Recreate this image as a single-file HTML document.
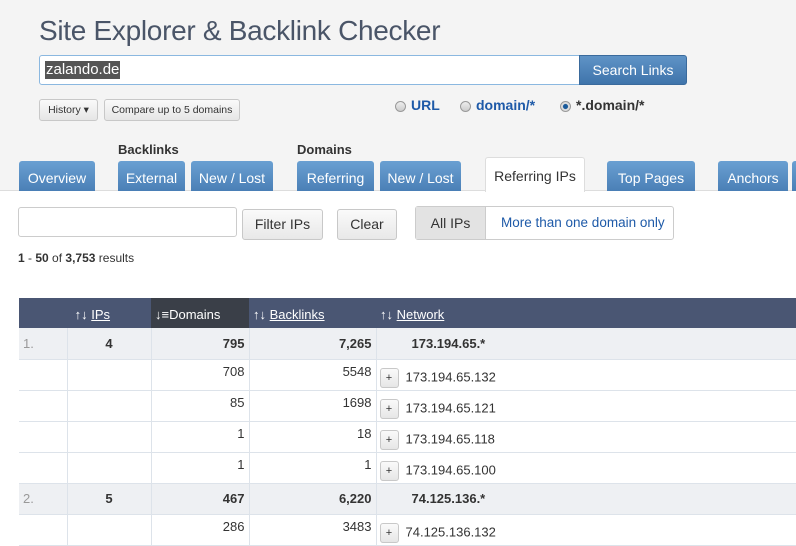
<!DOCTYPE html>
<html><head><style>
*{margin:0;padding:0;box-sizing:border-box}
body{width:796px;height:542px;overflow:hidden;background:#fff;font-family:"Liberation Sans",sans-serif;position:relative;color:#333}
.top{position:absolute;left:0;top:0;width:796px;height:191px;background:#f4f4f4;border-bottom:1px solid #ddd}
.a{position:absolute}
h1{position:absolute;left:39px;top:15px;font-size:28px;font-weight:normal;color:#4a5568;letter-spacing:-0.3px}
.inp{left:39px;top:55px;width:541px;height:30px;background:#fff;border:1px solid #8bb8e0;border-radius:3px 0 0 3px}
.sel{left:45px;top:61px;background:#555;color:#fff;font-size:15px;line-height:18px;padding:0 1px}
.sb{left:579px;top:55px;width:108px;height:30px;background:linear-gradient(#5f93c6,#3f74ab);border:1px solid #3a6a9c;border-radius:0 3px 3px 0;color:#fff;font-size:14px;text-align:center;line-height:28px}
.btn{height:22px;border:1px solid #c8c8c8;border-radius:3px;background:linear-gradient(#fafafa,#e6e6e6);font-size:10.5px;line-height:20px;text-align:center;color:#333}
.rad{width:11px;height:11px;border:1px solid #999;border-radius:50%;background:linear-gradient(#eee,#ccc)}
.rl{font-size:14px;font-weight:bold;color:#1e5aa8}
.tab{top:161px;height:30px;background:linear-gradient(#6aa0d2,#4a7fb6);color:#fff;font-size:14px;text-align:center;line-height:34px;border-radius:3px 3px 0 0}
.lbl{font-size:13px;font-weight:bold;top:142px;color:#333}
.fb{height:31px;border:1px solid #c8c8c8;border-radius:3px;background:linear-gradient(#fafafa,#e8e8e8);font-size:14px;line-height:29px;text-align:center;color:#333}
table{position:absolute;left:19px;top:298px;border-collapse:collapse;font-size:13px;width:790px}
th{background:#4a5673;color:#fff;font-weight:normal;height:30px;text-align:left;font-size:13px;padding-top:3px}
th u{text-decoration:underline}
td{height:31px;border:1px solid #dde3ea;border-top:0;border-left:0}
tr.g td{background:#eef0f3;font-weight:bold}
.r{text-align:right;padding-right:4px}
.pl{display:inline-block;width:19px;height:20px;border:1px solid #c8c8c8;border-radius:3px;background:linear-gradient(#fafafa,#e6e6e6);font-size:11px;text-align:center;line-height:18px;vertical-align:middle;margin:0 7px 0 3px;font-weight:normal}
.sub td{vertical-align:top;padding-top:4px}
.sub td.n{vertical-align:middle;padding-top:6px}
</style></head><body>
<div class="top"></div>
<h1>Site Explorer &amp; Backlink Checker</h1>
<div class="a inp"></div><div class="a sel">zalando.de</div>
<div class="a sb">Search Links</div>
<div class="a btn" style="left:39px;top:99px;width:59px">History ▾</div>
<div class="a btn" style="left:104px;top:99px;width:136px">Compare up to 5 domains</div>
<div class="a rad" style="left:395px;top:101px"></div><div class="a rl" style="left:411px;top:97px">URL</div>
<div class="a rad" style="left:460px;top:101px"></div><div class="a rl" style="left:476px;top:97px">domain/*</div>
<div class="a rad" style="left:560px;top:101px;background:radial-gradient(#1a5a9a 35%,#ddd 45%)"></div><div class="a rl" style="left:576px;top:97px;color:#333">*.domain/*</div>
<div class="a lbl" style="left:118px">Backlinks</div>
<div class="a lbl" style="left:297px">Domains</div>
<div class="a tab" style="left:19px;width:76px">Overview</div>
<div class="a tab" style="left:118px;width:67px">External</div>
<div class="a tab" style="left:191px;width:82px">New / Lost</div>
<div class="a tab" style="left:297px;width:77px">Referring</div>
<div class="a tab" style="left:380px;width:81px">New / Lost</div>
<div class="a tab" style="left:485px;top:157px;height:35px;width:100px;background:#fff;border:1px solid #ddd;border-bottom:0;color:#333;line-height:36px">Referring IPs</div>
<div class="a tab" style="left:607px;width:88px">Top Pages</div>
<div class="a tab" style="left:718px;width:70px">Anchors</div>
<div class="a tab" style="left:792px;width:10px"></div>
<div class="a" style="left:18px;top:207px;width:219px;height:30px;border:1px solid #ccc;border-radius:3px"></div>
<div class="a fb" style="left:242px;top:209px;width:81px">Filter IPs</div>
<div class="a fb" style="left:337px;top:209px;width:60px">Clear</div>
<div class="a" style="left:415px;top:206px;width:259px;height:34px;border:1px solid #ccc;border-radius:3px;background:#fff;font-size:14px;line-height:32px">
<span style="position:absolute;left:0;top:0;width:70px;height:32px;background:#e3e3e3;text-align:center;border-right:1px solid #ccc">All IPs</span>
<span style="position:absolute;left:85px;color:#1e5aa8;font-size:13.5px">More than one domain only</span></div>
<div class="a" style="left:18px;top:251px;font-size:12px"><b>1</b> - <b>50</b> of <b>3,753</b> results</div>
<table>
<tr><th style="width:48px"></th><th style="width:84px;padding-left:4px">&nbsp;↑↓ <u>IPs</u></th><th style="width:98px;background:#3a3f48;padding-left:4px">↓≡Domains</th><th style="width:127px;padding-left:4px">↑↓ <u>Backlinks</u></th><th style="padding-left:4px">↑↓ <u>Network</u></th></tr>
<tr class="g"><td style="font-weight:normal;color:#999;padding-left:4px">1.</td><td style="text-align:center">4</td><td class="r">795</td><td class="r">7,265</td><td style="padding-left:35px">173.194.65.*</td></tr>
<tr class="sub"><td></td><td></td><td class="r">708</td><td class="r">5548</td><td class="n"><span class="pl">+</span>173.194.65.132</td></tr>
<tr class="sub"><td></td><td></td><td class="r">85</td><td class="r">1698</td><td class="n"><span class="pl">+</span>173.194.65.121</td></tr>
<tr class="sub"><td></td><td></td><td class="r">1</td><td class="r">18</td><td class="n"><span class="pl">+</span>173.194.65.118</td></tr>
<tr class="sub"><td></td><td></td><td class="r">1</td><td class="r">1</td><td class="n"><span class="pl">+</span>173.194.65.100</td></tr>
<tr class="g"><td style="font-weight:normal;color:#999;padding-left:4px">2.</td><td style="text-align:center">5</td><td class="r">467</td><td class="r">6,220</td><td style="padding-left:35px">74.125.136.*</td></tr>
<tr class="sub"><td></td><td></td><td class="r">286</td><td class="r">3483</td><td class="n"><span class="pl">+</span>74.125.136.132</td></tr>
</table>
</body></html>
